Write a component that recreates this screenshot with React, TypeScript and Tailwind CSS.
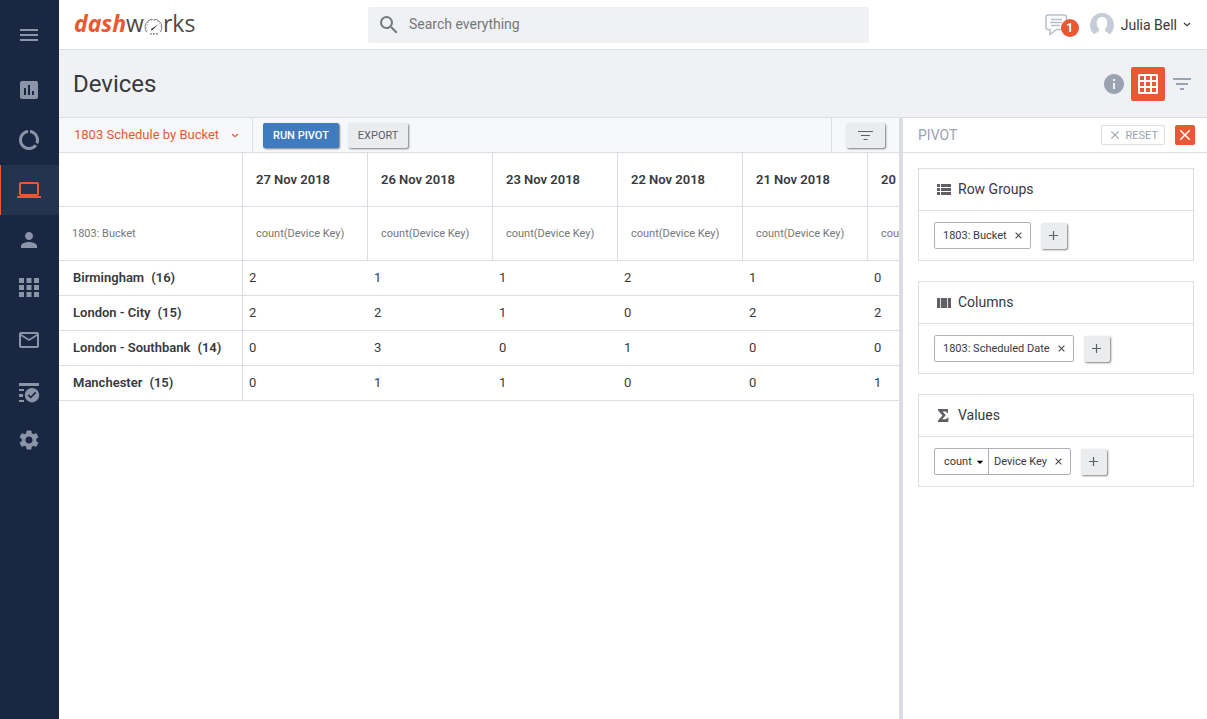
import type { ReactNode } from "react";
import {
  MdMenu,
  MdInsertChart,
  MdDataUsage,
  MdLaptop,
  MdPerson,
  MdMailOutline,
  MdSettings,
  MdSearch,
  MdInfo,
  MdFilterList,
  MdClose,
  MdArrowDropDown,
} from "react-icons/md";

const dates = ["27 Nov 2018", "26 Nov 2018", "23 Nov 2018", "22 Nov 2018", "21 Nov 2018", "20 Nov 2018"];

const rows = [
  { name: "Birmingham", total: 16, values: [2, 1, 1, 2, 1, 0] },
  { name: "London - City", total: 15, values: [2, 2, 1, 0, 2, 2] },
  { name: "London - Southbank", total: 14, values: [0, 3, 0, 1, 0, 0] },
  { name: "Manchester", total: 15, values: [0, 1, 1, 0, 0, 1] },
];

function AppsIcon() {
  return (
    <svg width="20" height="24" viewBox="0 0 20 24" fill="currentColor" aria-hidden="true">
      <path d="M0 0h5v5H0zM7.500 0h5v5h-5zM15 0h5v5h-5zM0 7h5v5H0zM7.500 7h5v5h-5zM15 7h5v5h-5zM0 14h5v5H0zM7.500 14h5v5h-5zM15 14h5v5h-5z" />
    </svg>
  );
}

function TasksIcon() {
  return (
    <svg width="22" height="26" viewBox="0 0 22 26" fill="currentColor" aria-hidden="true">
      <path d="M1 6h20v3H1zM1 12h5v2H1zM1 17h4v3H1zM1 23h5v2H1z" />
      <path
        fillRule="evenodd"
        d="M14 11a7.200 7.200 0 1 0 0 14.400A7.200 7.200 0 0 0 14 11zm-1.200 10.600-3.200-3.200 1.200-1.200 2 2 4.300-4.400 1.200 1.200z"
      />
    </svg>
  );
}

function GridIcon() {
  return (
    <svg width="20" height="20" viewBox="0 0 20 20" fill="currentColor" aria-hidden="true">
      <path
        fillRule="evenodd"
        d="M1.500 0h17A1.500 1.500 0 0 1 20 1.500v17a1.500 1.500 0 0 1-1.500 1.500h-17A1.500 1.500 0 0 1 0 18.500v-17A1.500 1.500 0 0 1 1.500 0zM2 2v4h4V2zm6 0v4h4V2zm6 0v4h4V2zM2 8v4h4V8zm6 0v4h4V8zm6 0v4h4V8zM2 14v4h4v-4zm6 0v4h4v-4zm6 0v4h4v-4z"
      />
    </svg>
  );
}

function RowsIcon() {
  return (
    <svg width="14" height="11" viewBox="0 0 14 11" fill="currentColor" aria-hidden="true">
      <path d="M0 0h3v3H0zM4 0h10v3H4zM0 4h3v3H0zM4 4h10v3H4zM0 8h3v3H0zM4 8h10v3H4z" />
    </svg>
  );
}

function ColumnsIcon() {
  return (
    <svg width="14" height="10" viewBox="0 0 14 10" fill="currentColor" aria-hidden="true">
      <path d="M0 0h3v10H0zM3.800 0h6.400v10H3.800zM11 0h3v10h-3z" />
    </svg>
  );
}

function SigmaIcon() {
  return (
    <svg width="12" height="13" viewBox="0 0 12 13" fill="currentColor" aria-hidden="true">
      <path d="M0 0h10v4H9C8.500 2.800 8 2.600 6.800 2.600H4.600L7.800 6.300 4.200 10.200H7c1.500 0 2-.4 2.500-1.600h1L10.300 13H0v-1.500l4.500-5L0 1.500z" />
    </svg>
  );
}

function PlusIcon() {
  return (
    <svg width="10" height="10" viewBox="0 0 10 10" fill="none" stroke="currentColor" strokeWidth="1.200" aria-hidden="true">
      <path d="M0 4.500h9M4.500 0v9" />
    </svg>
  );
}

function Chevron() {
  return (
    <svg width="8" height="5" viewBox="0 0 8 5" fill="none" stroke="currentColor" strokeWidth="1.200" aria-hidden="true">
      <path d="M1 1l3 2.600L7 1" />
    </svg>
  );
}

function Gauge() {
  return (
    <svg width="19" height="16" viewBox="0 0 19 16" fill="none" stroke="#6a6a6a" aria-hidden="true">
      <path strokeWidth=".9" d="M2.600 13.200A8.400 8.400 0 1 1 16.400 13.200" />
      <path strokeWidth=".9" strokeDasharray=".7 2.300" d="M3.800 12A6.800 6.800 0 1 1 15.200 12" />
      <path fill="#4a4a4a" stroke="none" d="M14.300 5.200 8.500 11.200 6.800 11.500l.5-1.800z" />
      <path strokeWidth="1.300" strokeDasharray="1.800 1.200" d="M6 14.800h8" />
    </svg>
  );
}

function CommentIcon() {
  return (
    <svg width="24" height="22" viewBox="0 0 24 22" fill="none" stroke="#b9bfc9" strokeWidth="1.500" aria-hidden="true">
      <path d="M3 1h16.500a2 2 0 0 1 2 2v10.500a2 2 0 0 1-2 2h-8L5 20.500v-5H3a2 2 0 0 1-2-2V3a2 2 0 0 1 2-2z" />
      <path d="M6 5.500h11M5 8.500h12M6 11.500h9" />
    </svg>
  );
}

function Avatar() {
  return (
    <svg width="24" height="24" viewBox="0 0 24 24" aria-hidden="true">
      <path
        fill="#c5ccd7"
        d="M4.500 21.400A12 12 0 1 1 19.500 21.400C18.500 19.800 15.800 19.300 15 17.800c-.3-1.300.2-2 .9-3 1.200-1.800 1.500-3.500 1.400-5.600C17.100 6 15.200 4 12 4S6.900 6 6.700 9.200c-.1 2.100.2 3.800 1.400 5.600.7 1 1.200 1.700.9 3-.8 1.500-3.500 2-4.500 3.600z"
      />
    </svg>
  );
}

const navItems: { label: string; icon: ReactNode; active?: boolean }[] = [
  { label: "Dashboards", icon: <MdInsertChart size={24} /> },
  { label: "Projects", icon: <MdDataUsage size={24} /> },
  { label: "Devices", icon: <MdLaptop size={24} />, active: true },
  { label: "Users", icon: <MdPerson size={24} /> },
  { label: "Applications", icon: <AppsIcon /> },
  { label: "Mailboxes", icon: <MdMailOutline size={24} /> },
  { label: "Tasks", icon: <TasksIcon /> },
  { label: "Settings", icon: <MdSettings size={24} /> },
];

function Sidebar() {
  return (
    <nav aria-label="Main" className="flex w-[59px] shrink-0 flex-col bg-[#192743] pt-[10px] text-[#8c95a8]">
      <button type="button" aria-label="Menu" className="mb-[5px] flex h-[50px] items-center justify-center pr-px">
        <MdMenu size={24} />
      </button>
      {navItems.map((item) => (
        <a
          key={item.label}
          href="#"
          aria-label={item.label}
          className={
            item.active
              ? "flex h-[50px] items-center justify-center border-l border-[#e95833] bg-[#24344e] pr-[2px] text-[#e95833]"
              : "flex h-[50px] items-center justify-center pr-px"
          }
        >
          {item.icon}
        </a>
      ))}
    </nav>
  );
}

function TopBar() {
  return (
    <header className="flex h-[50px] shrink-0 items-center border-b border-[#dcdce4] bg-white pr-4 pl-[15px]">
      <a href="#" aria-label="dashworks" className="flex w-[294px] shrink-0 items-center pb-1 font-['Open_Sans',sans-serif] text-[23px] leading-8 text-[#4a4a4a]">
        <span className="font-bold text-[#e95833] italic">dash</span>
        <span>w</span>
        <span className="pt-2">
          <Gauge />
        </span>
        <span>rks</span>
      </a>
      <div className="flex h-9 w-[501px] items-center gap-2 rounded-xs bg-[#f0f1f5] pl-[9px] text-[#757779]">
        <MdSearch size={24} className="shrink-0" />
        <input
          type="text"
          aria-label="Search everything"
          placeholder="Search everything"
          className="w-full bg-transparent pb-[2px] text-sm outline-none placeholder:text-[#757779]"
        />
      </div>
      <div className="ml-auto flex shrink-0 items-center">
        <button type="button" aria-label="Messages, 1 unread" className="relative mr-[11px] flex h-6 w-[34px] items-center">
          <CommentIcon />
          <span className="absolute right-0 bottom-0 flex size-[18px] items-center justify-center rounded-full bg-[#e95833] text-xs font-bold text-white">
            1
          </span>
        </button>
        <button type="button" className="flex items-center gap-[6px] text-sm">
          <Avatar />
          <span className="pl-px">Julia Bell</span>
          <Chevron />
        </button>
      </div>
    </header>
  );
}

function TitleBar() {
  return (
    <div className="flex h-[68px] shrink-0 items-center border-b border-[#dcdce4] bg-[#f0f1f5] pr-[13px] pl-[14px]">
      <h1 className="text-2xl">Devices</h1>
      <div className="ml-auto flex items-center text-[#9ba2b1]">
        <button type="button" aria-label="Details" className="mr-[5px]">
          <MdInfo size={24} />
        </button>
        <button type="button" aria-label="Grid" className="mr-[5px] flex size-[34px] items-center justify-center rounded-xs bg-[#e95833] text-white">
          <GridIcon />
        </button>
        <button type="button" aria-label="Filters">
          <MdFilterList size={24} />
        </button>
      </div>
    </div>
  );
}

function Toolbar() {
  return (
    <div className="flex h-[35px] shrink-0 border-b border-[#dcdce4] bg-[#f7f8fa]">
      <button type="button" className="flex w-[194px] items-center justify-between border-r border-[#dcdce4] pr-[13px] pl-[15px] text-[13px] text-[#e95833]">
        1803 Schedule by Bucket
        <Chevron />
      </button>
      <div className="flex items-center gap-[9px] pl-[10px] text-[11px]">
        <button type="button" className="h-[25px] rounded-xs bg-[#407bc0] px-[10px] pt-[2px] font-medium text-white shadow-[1px_1px_2px_#00000080]">
          RUN PIVOT
        </button>
        <button type="button" className="h-[25px] rounded-xs bg-[#ebecee] px-[10px] pt-[2px] text-[#5e6064] shadow-[1px_1px_2px_#00000080]">
          EXPORT
        </button>
      </div>
      <div className="ml-auto flex items-center border-l border-[#dcdce4] pr-[14px] pl-[14px]">
        <button type="button" aria-label="Filter" className="flex h-[25px] w-[39px] items-center justify-center rounded-xs bg-[#ebecee] text-[#5e6064] shadow-[1px_1px_2px_#00000080]">
          <svg width="15" height="9" viewBox="0 0 15 9" fill="currentColor" aria-hidden="true">
            <path d="M0 0h15v1H0zM3 4h9v1H3zM5.500 8h4v1h-4z" />
          </svg>
        </button>
      </div>
    </div>
  );
}

function PivotTable() {
  return (
    <div className="min-h-0 flex-1 overflow-hidden">
      <table className="w-[934px] table-fixed border-separate border-spacing-0 text-left text-[13px]">
        <colgroup>
          <col className="w-[184px]" />
          {dates.map((date) => (
            <col key={date} className="w-[125px]" />
          ))}
        </colgroup>
        <thead>
          <tr className="h-[54px]">
            <td className="border-r border-b border-[#dcdce4]" />
            {dates.map((date) => (
              <th key={date} scope="col" className="border-r border-b border-[#dcdce4] pl-[13px] font-semibold whitespace-nowrap">
                {date}
              </th>
            ))}
          </tr>
          <tr className="h-[54px] text-[11px] text-[#757779]">
            <th scope="col" className="border-r border-b border-[#dcdce4] pt-px pl-[13px] font-normal">
              1803: Bucket
            </th>
            {dates.map((date) => (
              <th key={date} scope="col" className="border-r border-b border-[#dcdce4] pt-px pl-[13px] font-normal whitespace-nowrap">
                count(Device Key)
              </th>
            ))}
          </tr>
        </thead>
        <tbody>
          {rows.map((row) => (
            <tr key={row.name} className="h-[35px]">
              <th scope="row" className="border-r border-b border-[#dcdce4] pl-[14px] font-semibold whitespace-nowrap">
                {row.name}
                <span className="ml-[7px]">({row.total})</span>
              </th>
              {row.values.map((value, index) => (
                <td key={dates[index]} className="border-b border-[#dcdce4] pl-[6px]">
                  {value}
                </td>
              ))}
            </tr>
          ))}
        </tbody>
      </table>
    </div>
  );
}

function AddButton({ label }: { label: string }) {
  return (
    <button type="button" aria-label={label} className="ml-[10px] flex size-[26px] items-center justify-center rounded-xs bg-[#ebecee] text-[#5e6064] shadow-[1px_1px_2px_#00000080]">
      <PlusIcon />
    </button>
  );
}

function Chip({ label, children }: { label: string; children?: ReactNode }) {
  return (
    <div className="flex h-[27px] items-center rounded-xs border border-[#aeafb9] text-[11px]">
      {children}
      <span className={children ? "pt-px pl-[5px]" : "pt-px pl-2"}>{label}</span>
      <button type="button" aria-label={`Remove ${label}`} className="mr-[6px] ml-[6px]">
        <MdClose size={11} />
      </button>
    </div>
  );
}

function Section({ title, icon, children }: { title: string; icon: ReactNode; children: ReactNode }) {
  return (
    <section className="border border-[#dcdce4]">
      <h3 className="flex h-[42px] items-center border-b border-[#dcdce4] pb-px pl-[17px] text-sm">
        <span className="mr-[6px] flex w-4 justify-center pt-px text-[#5e6064]">{icon}</span>
        {title}
      </h3>
      <div className="flex h-[49px] items-center pl-[15px]">{children}</div>
    </section>
  );
}

function PivotPanel() {
  return (
    <aside className="w-[308px] shrink-0 border-l-4 border-[#dcdce4] bg-white">
      <div className="flex h-[35px] items-center border-b border-[#dcdce4] pr-3 pl-[15px] text-[#9ba2b1]">
        <h2 className="text-sm">PIVOT</h2>
        <button type="button" className="mr-[10px] ml-auto flex h-5 items-center gap-1 rounded-xs border border-[#dcdce4] px-[6px] text-[11px]">
          <MdClose size={14} />
          <span className="pt-[2px]">RESET</span>
        </button>
        <button type="button" aria-label="Close" className="flex size-5 items-center justify-center rounded-xs bg-[#e95833] text-white">
          <MdClose size={18} />
        </button>
      </div>
      <div className="flex flex-col gap-5 py-[15px] pr-[13px] pl-[15px]">
        <Section title="Row Groups" icon={<RowsIcon />}>
          <Chip label="1803: Bucket" />
          <AddButton label="Add row group" />
        </Section>
        <Section title="Columns" icon={<ColumnsIcon />}>
          <Chip label="1803: Scheduled Date" />
          <AddButton label="Add column" />
        </Section>
        <Section title="Values" icon={<SigmaIcon />}>
          <Chip label="Device Key">
            <div className="relative h-full border-r border-[#aeafb9]">
              <select aria-label="Aggregation" className="h-full w-[53px] appearance-none bg-transparent pt-px pl-[9px]">
                <option>count</option>
                <option>sum</option>
                <option>min</option>
                <option>max</option>
              </select>
              <MdArrowDropDown size={16} className="pointer-events-none absolute top-[5px] right-0 text-black" />
            </div>
          </Chip>
          <AddButton label="Add value" />
        </Section>
      </div>
    </aside>
  );
}

export default function App() {
  return (
    <div className="flex min-h-screen bg-white font-[Roboto,sans-serif] text-[#363a3e]">
      <Sidebar />
      <div className="flex min-w-0 flex-1 flex-col">
        <TopBar />
        <TitleBar />
        <div className="flex flex-1">
          <main className="flex min-w-0 flex-1 flex-col">
            <Toolbar />
            <PivotTable />
          </main>
          <PivotPanel />
        </div>
      </div>
    </div>
  );
}
